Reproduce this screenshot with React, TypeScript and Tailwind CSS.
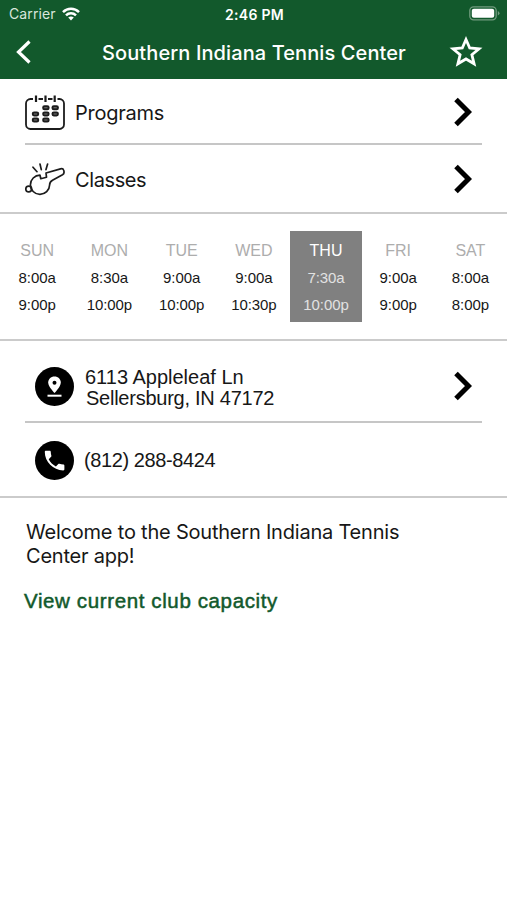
import { FC } from 'react';

const hours = [
  { day: 'SUN', open: '8:00a', close: '9:00p' },
  { day: 'MON', open: '8:30a', close: '10:00p' },
  { day: 'TUE', open: '9:00a', close: '10:00p' },
  { day: 'WED', open: '9:00a', close: '10:30p' },
  { day: 'THU', open: '7:30a', close: '10:00p', today: true },
  { day: 'FRI', open: '9:00a', close: '9:00p' },
  { day: 'SAT', open: '8:00a', close: '8:00p' },
];

const Chevron: FC = () => (
  <svg className="mb-px ml-auto shrink-0" width="18" height="30" viewBox="0 0 18 30">
    <path d="M2 2.5 14.5 15 2 27.5" fill="none" stroke="#000" strokeWidth="5" />
  </svg>
);

const CalendarIcon: FC = () => (
  <svg className="shrink-0" width="40" height="36" viewBox="0 0 40 36" fill="none" stroke="#1c1c1c">
    <path
      d="M8 4H5.5A4.5 4.5 0 0 0 1 8.500V29.500A4.500 4.500 0 0 0 5.500 34H34.500A4.500 4.500 0 0 0 39 29.500V8.500A4.500 4.500 0 0 0 34.500 4H32.500M13.500 4H18M23 4H27.500"
      strokeWidth="1.800"
    />
    <path d="M11 .5V7M20.500 .5V7M29.700 .5V7" strokeWidth="2.200" />
    <g fill="#777" strokeWidth="2">
      <rect x="18.200" y="11.300" width="5.400" height="3" rx="1.300" />
      <rect x="27.500" y="11.300" width="5.400" height="3" rx="1.300" />
      <rect x="7.800" y="17.400" width="5.400" height="3" rx="1.300" />
      <rect x="18.200" y="17.400" width="5.400" height="3" rx="1.300" />
      <rect x="27.500" y="17.400" width="5.400" height="3" rx="1.300" />
      <rect x="7.800" y="23.500" width="5.400" height="3" rx="1.300" />
      <rect x="18.200" y="23.500" width="5.400" height="3" rx="1.300" />
    </g>
  </svg>
);

const WhistleIcon: FC = () => (
  <svg
    className="shrink-0"
    width="40"
    height="34"
    viewBox="0 0 40 34"
    fill="none"
    stroke="#1c1c1c"
    strokeWidth="1.700"
    strokeLinejoin="round"
    strokeLinecap="round"
  >
    <path d="M15 12.200A9.600 9.600 0 1 0 24.600 22C24.600 19.500 25.500 18.300 27.500 17.200L37.500 11.700C39 10.800 39.400 9 38.600 7C38.200 5.700 37 5.500 35.500 5.900L21 10L21.500 14.200L15.800 15.700Z" />
    <circle cx="3.700" cy="26" r="2.900" />
    <path d="M8 4.200 12 8.700M15 1 16.300 6.600M22.600 1 21 6.600" />
  </svg>
);

const App: FC = () => {
  return (
    <main className="min-h-[900px] w-[507px] overflow-hidden bg-white font-['Inter',sans-serif] text-[#171717]">
      <header className="h-[79px] bg-[#12592c] text-white">
        <div className="grid h-7 grid-cols-3 items-center pl-[9px] pr-[7px] text-[14px] leading-none">
          <div className="flex items-center gap-[6px] text-[#d9e6dc]">
            <span className="tracking-[0.1px]">Carrier</span>
            <svg width="18" height="14" viewBox="0 0 18 14" fill="none" stroke="#fff" strokeWidth="2.500">
              <path d="M1 5.200C5.500.7 12.500.7 17 5.200M4 8.400C6.800 5.600 11.200 5.600 14 8.400" />
              <path d="M9 13.500 6.200 10.600Q9 8.300 11.800 10.600Z" fill="#fff" stroke="none" />
            </svg>
          </div>
          <span className="whitespace-nowrap pt-px text-center font-semibold tracking-[0.3px]">2:46 PM</span>
          <svg className="mb-px justify-self-end" width="31" height="15" viewBox="0 0 31 15">
            <rect x=".8" y=".8" width="26.400" height="13" rx="3.800" fill="none" stroke="#719b7e" strokeWidth="1.300" />
            <rect x="2.800" y="2.800" width="22.400" height="9" rx="2" fill="#fff" />
            <path d="M28.800 5v4.600q1.700-.8 1.700-2.300T28.800 5Z" fill="#719b7e" />
          </svg>
        </div>
        <div className="flex h-12 items-center pl-4 pr-6">
          <svg width="32" height="24" viewBox="0 0 32 24">
            <path d="M13.500 1.500 2.500 12 13.500 22.500" fill="none" stroke="#fff" strokeWidth="3.200" />
          </svg>
          <h1 className="ml-[54px] whitespace-nowrap pt-px text-[20px] font-medium tracking-[0.1px]">
            Southern Indiana Tennis Center
          </h1>
          <svg className="ml-auto" width="34" height="34" viewBox="0 0 34 34">
            <path
              d="M17 4.500 20.700 13 30 13.800 22.900 19.800 25.100 28.800 17 24 8.900 28.800 11.100 19.800 4 13.800 13.300 13Z"
              fill="none"
              stroke="#fff"
              strokeWidth="2.800"
            />
          </svg>
        </div>
      </header>

      <section className="border-b-2 border-[#cbcbcb] px-[25px]">
        <div className="flex h-[66px] items-center gap-[10px] border-b-2 border-[#c6c6c6] pr-[10px] pt-[3px]">
          <CalendarIcon />
          <span className="text-[20px] tracking-[-0.25px]">Programs</span>
          <Chevron />
        </div>
        <div className="flex h-[67px] items-center gap-[10px] pr-[10px] pt-[2px]">
          <WhistleIcon />
          <span className="text-[20px] tracking-[-0.4px]">Classes</span>
          <Chevron />
        </div>
      </section>

      <section className="flex h-[127px] border-b-2 border-[#cbcbcb] pl-px pt-[17px] font-['Liberation_Sans',sans-serif]">
        {hours.map((item) => (
          <div
            key={item.day}
            className={
              item.today
                ? 'h-[91px] w-[72px] shrink-0 bg-[#808080] pt-[6px] text-center text-[#e2e2e2]'
                : 'h-[91px] w-[72.250px] shrink-0 pt-[6px] text-center'
            }
          >
            <p className={item.today ? 'text-[16px] leading-[27px] text-white' : 'text-[16px] leading-[27px] text-[#adadad]'}>
              {item.day}
            </p>
            <p className="text-[15px] leading-[27px] tracking-[-0.1px]">{item.open}</p>
            <p className="text-[15px] leading-[27px] tracking-[-0.1px]">{item.close}</p>
          </div>
        ))}
      </section>

      <section className="border-b-2 border-[#cbcbcb] px-[25px] font-['Liberation_Sans',sans-serif] text-[20px]">
        <div className="flex h-[82px] items-center border-b-2 border-[#c6c6c6] pl-[10px] pr-[10px] pt-[11px]">
          <svg className="mb-px shrink-0" width="39" height="39" viewBox="0 0 39 39">
            <circle cx="19.500" cy="19.500" r="19.500" fill="#000" />
            <path
              d="M19.500 9.500C15.800 9.500 13.200 12.200 13.200 15.600C13.200 20 19.500 26 19.500 26S25.800 20 25.800 15.600C25.800 12.200 23.200 9.500 19.500 9.500Z"
              fill="#fff"
            />
            <circle cx="19.500" cy="15.700" r="2" fill="#000" />
            <path d="M12.500 28.700H26.500" stroke="#fff" strokeWidth="2" />
          </svg>
          <p className="ml-[11px] whitespace-nowrap pt-[3px] leading-[21px]">
            6113 Appleleaf Ln
            <span className="block pl-px tracking-[-0.250px]">Sellersburg, IN 47172</span>
          </p>
          <Chevron />
        </div>
        <div className="flex h-[73px] items-center pl-[10px] pt-px">
          <svg className="shrink-0" width="39" height="39" viewBox="0 0 39 39">
            <circle cx="19.500" cy="19.500" r="19.500" fill="#000" />
            <path
              transform="translate(6.500 6.500) scale(1.090)"
              d="M6.620 10.790c1.440 2.830 3.760 5.140 6.590 6.590l2.200-2.200c.27-.27.67-.36 1.020-.24 1.120.37 2.330.57 3.570.57.55 0 1 .45 1 1V20c0 .55-.45 1-1 1-9.390 0-17-7.610-17-17 0-.55.45-1 1-1h3.500c.55 0 1 .45 1 1 0 1.250.2 2.450.57 3.570.11.35.03.74-.25 1.020l-2.200 2.200z"
              fill="#fff"
            />
          </svg>
          <span className="ml-[10px] tracking-[-0.4px]">(812) 288-8424</span>
        </div>
      </section>

      <section className="px-6 pt-[22px]">
        <p className="w-[400px] pl-[2px] text-[20px] leading-[24px] tracking-[-0.210px]">
          Welcome to the Southern Indiana Tennis Center app!
        </p>
        <a
          href="#capacity"
          className="mt-[20px] block font-['Liberation_Sans',sans-serif] text-[20.500px] leading-[26px] tracking-[0.620px] text-[#12592c] [-webkit-text-stroke:0.5px_#12592c]"
        >
          View current club capacity
        </a>
      </section>
    </main>
  );
};

export default App;
